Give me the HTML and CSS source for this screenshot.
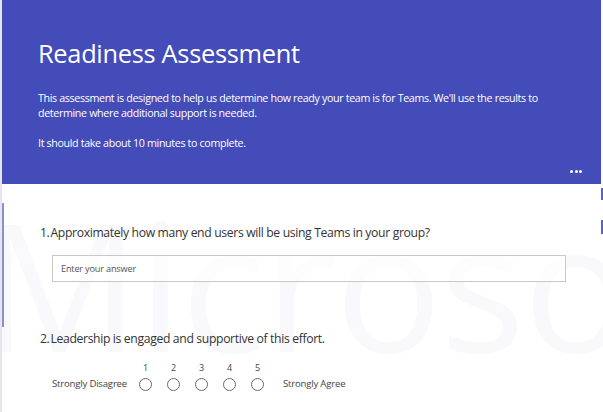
FILE: index.html
```html
<!DOCTYPE html>
<html lang="en">
<head>
<meta charset="utf-8">
<title>Readiness Assessment</title>
<link rel="stylesheet" href="styles.css">
</head>
<body>
<div class="page">
  <div class="watermark" aria-hidden="true">Microsoft</div>
  <div class="edge-left"></div>
  <div class="edge-right edge-right-a"></div>
  <div class="edge-right edge-right-b"></div>
  <header class="banner">
    <h1 class="title">Readiness Assessment</h1>
    <p class="desc">This assessment is designed to help us determine how ready your team is for Teams. We'll use the results to determine where additional support is needed.</p>
    <p class="desc time">It should take about 10 minutes to complete.</p>
    <div class="more"><span></span><span></span><span></span></div>
  </header>
  <main class="form">
    <section class="q q1">
      <div class="q-title"><span class="num">1.</span>Approximately how many end users will be using Teams in your group?</div>
      <div class="input">Enter your answer</div>
    </section>
    <section class="q q2">
      <div class="q-title"><span class="num">2.</span>Leadership is engaged and supportive of this effort.</div>
      <div class="scale">
        <span class="lbl">Strongly Disagree</span>
        <div class="opts">
          <div class="opt"><span class="n">1</span><span class="radio"></span></div>
          <div class="opt"><span class="n">2</span><span class="radio"></span></div>
          <div class="opt"><span class="n">3</span><span class="radio"></span></div>
          <div class="opt"><span class="n">4</span><span class="radio"></span></div>
          <div class="opt"><span class="n">5</span><span class="radio"></span></div>
        </div>
        <span class="lbl agree">Strongly Agree</span>
      </div>
    </section>
  </main>
</div>
</body>
</html>
```
FILE: styles.css
```css
* { box-sizing: border-box; }
html, body { margin: 0; padding: 0; }
body {
  width: 603px;
  height: 412px;
  overflow: hidden;
  background: #ffffff;
  font-family: "Open Sans", "Noto Sans", sans-serif;
}
.page {
  position: relative;
  width: 603px;
  height: 412px;
  background: #fff;
  border-left: 2px solid #e6e6ec;
  overflow: hidden;
}
.watermark {
  position: absolute;
  left: -22px;
  top: 162px;
  font-family: "Open Sans", sans-serif;
  font-size: 178px;
  font-weight: 400;
  color: #f9f9fb;
  white-space: nowrap;
  letter-spacing: -2px;
  z-index: 0;
}
.edge-left {
  position: absolute;
  left: 0;
  top: 203px;
  width: 2px;
  height: 124px;
  background: #8b8fcf;
  z-index: 1;
}
.edge-right {
  position: absolute;
  right: 0;
  width: 2px;
  background: #5b62c4;
  z-index: 1;
}
.edge-right-a { top: 188px; height: 12px; }
.edge-right-b { top: 220px; height: 14px; }
.banner {
  position: relative;
  z-index: 1;
  width: 599px;
  height: 184px;
  background: #434cb8;
  color: #ffffff;
  padding: 36px 0 0 36px;
}
.title {
  margin: 0;
  font-size: 25.4px;
  font-weight: 400;
  line-height: 34px;
  letter-spacing: -0.3px;
}
.desc {
  margin: 21px 0 0 0;
  font-size: 10.7px;
  line-height: 15px;
  width: 512px;
  letter-spacing: -0.35px;
}
.desc.time { margin-top: 15px; }
.more {
  position: absolute;
  right: 19px;
  top: 170px;
  display: flex;
  gap: 1.5px;
}
.more span {
  width: 3px;
  height: 3px;
  border-radius: 50%;
  background: #fff;
}
.form {
  position: relative;
  z-index: 1;
  padding: 40px 0 0 38px;
}
.q-title {
  font-size: 12.2px;
  color: #333333;
  letter-spacing: -0.35px;
  line-height: 18px;
}
.num { margin-right: 1px; }
.input {
  margin: 13px 0 0 12px;
  width: 514px;
  height: 27px;
  border: 1px solid #c8c8c8;
  background: rgba(255,255,255,0.6);
  font-size: 9.2px;
  color: #555555;
  padding: 0 8px;
  display: flex;
  align-items: center;
  letter-spacing: -0.2px;
}
.q2 { margin-top: 48px; }
.scale {
  display: flex;
  align-items: flex-end;
  margin: 14px 0 0 12px;
}
.lbl {
  font-size: 9.6px;
  color: #444444;
  line-height: 13px;
  padding-bottom: 1px;
  letter-spacing: -0.2px;
}
.opts { display: flex; gap: 15px; margin-left: 12px; }
.agree { margin-left: 19px; }
.opt {
  display: flex;
  flex-direction: column;
  align-items: center;
  width: 13px;
}
.n {
  font-size: 9px;
  color: #444;
  line-height: 12px;
  margin-bottom: 4px;
}
.radio {
  width: 13px;
  height: 13px;
  border: 1px solid #6b6b6b;
  border-radius: 50%;
  background: #fff;
}
```
